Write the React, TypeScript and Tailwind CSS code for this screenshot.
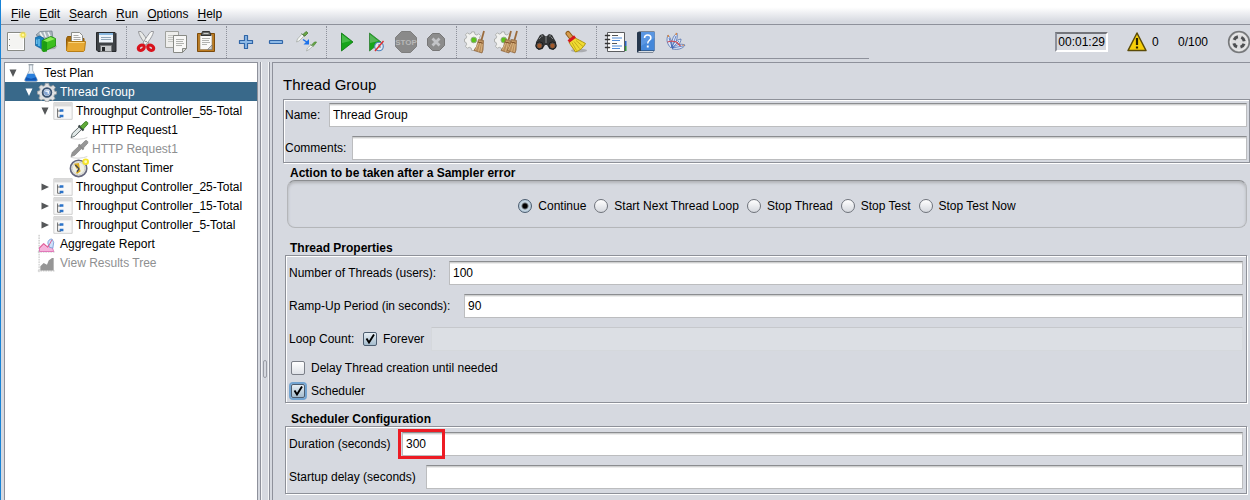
import React, { useState } from 'react';

type IconProps = { children: React.ReactNode; className?: string };

function Icon({ children, className = 'size-6' }: IconProps) {
  return (
    <svg viewBox="0 0 24 24" className={`block shrink-0 ${className}`} fill="none" aria-hidden="true">
      {children}
    </svg>
  );
}

const NewIcon = () => (
  <Icon>
    <path d="M3.500 2.500h17v18h-17z" fill="#f4f4f2" stroke="#888a85" />
    <path d="M4.500 3.500h15v16h-15z" stroke="#fff" />
    <path d="M5 9.500h1M5 15.500h1" stroke="#777" />
    <circle cx="19" cy="5" r="3.600" fill="#f7e96b" opacity=".6" />
    <circle cx="19" cy="5" r="2" fill="#fff6a0" stroke="#eedc3a" />
  </Icon>
);

const TemplatesIcon = () => (
  <Icon>
    <path d="M8 20l13-1 2-3-4-2z" fill="#777" opacity=".5" />
    <path d="M2 5l4-3.500 12-.5 1 8L10 9z" fill="#a9b4bc" stroke="#6d7d88" strokeWidth=".7" />
    <path d="M6 2.500l3 5M10 2l2 5M14 2l2 4" stroke="#eef3f6" strokeWidth="1.500" />
    <path d="M1.500 7.500l4-1.500 4 2v12L7 18.500l-5.500-3z" fill="#1b7fc0" stroke="#0d5a94" strokeWidth=".7" />
    <path d="M2.800 9.500v4.500M5 9v7" stroke="#7cd0f5" strokeWidth="1.200" />
    <path d="M8 10.500l9-4 4.500 2v7.500L9.500 21.500 8 20.500z" fill="#3cbf1e" stroke="#178a08" strokeWidth=".8" />
    <path d="M8.500 11.500l4.500-1v11l-3.500.5-1-1z" fill="#1d9c12" />
    <path d="M9.500 10.500l7-3.500 4.500 2-8 3z" fill="#8eec57" />
  </Icon>
);

const OpenIcon = () => (
  <Icon>
    <path d="M2.500 20.500V8.500l1-2h5l1.500 2h10v12z" fill="#a76b0c" stroke="#8f5a08" />
    <path d="M7.500 12V2.500h8l3 3V12z" fill="#fafafa" stroke="#8b8d89" />
    <path d="M9.500 5.500h5M9.500 7.500h7M9.500 9.500h7" stroke="#aaa" />
    <path d="M3.500 11.500h18l-1 9-1 1H3.500l-1-1z" fill="#e7a934" stroke="#b87e16" />
    <path d="M4.500 12.500h16" stroke="#f8d37c" />
  </Icon>
);

const SaveIcon = () => (
  <Icon>
    <path d="M2.500 2.500h18.500l1 1v18h-18l-1.500-1.500z" fill="#3e4246" stroke="#26292c" />
    <path d="M5 3h14v9.500H5z" fill="#eef4fa" />
    <path d="M5 3h14v2H5z" fill="#88b7df" />
    <path d="M7 7.500h10M7 9.500h10" stroke="#8fa6ba" />
    <path d="M6.500 15.500h11v6h-11z" fill="#c7cacc" stroke="#77797b" />
    <path d="M8 17h3v4H8z" fill="#24272a" />
  </Icon>
);

const CutIcon = () => (
  <Icon>
    <path d="M4.500 1.500c.5 4 4 9 8 13.500l2.500-2C12.500 8.500 9.500 4 7 1.500z" fill="#e8e9e7" stroke="#85878a" strokeWidth=".8" />
    <path d="M19.500 1.500c-.5 4-4 9-8 13.500L9 13c2.500-4.500 5.500-9 8-11.500z" fill="#f6f6f5" stroke="#85878a" strokeWidth=".8" />
    <circle cx="12" cy="11.500" r=".8" fill="#777" />
    <ellipse cx="7.300" cy="17.700" rx="3.200" ry="2.400" transform="rotate(-35 7.300 17.700)" stroke="#d9131d" strokeWidth="3.200" />
    <ellipse cx="16.700" cy="17.700" rx="3.200" ry="2.400" transform="rotate(35 16.700 17.700)" stroke="#d9131d" strokeWidth="3.200" />
  </Icon>
);

const CopyIcon = () => (
  <Icon>
    <path d="M1.500 1.500h13v16h-13z" fill="#eeeeec" stroke="#a0a29e" />
    <path d="M4 5.500h8M4 7.500h8M4 9.500h5M4 11.500h5" stroke="#c4c6c2" />
    <path d="M9.500 5.500h13v13l-4 4h-9z" fill="#f8f8f7" stroke="#888a85" />
    <path d="M12 9.500h8M12 11.500h7M12 13.500h8M12 15.500h6" stroke="#b1b3af" />
    <path d="M22.500 18.500h-4v4z" fill="#d5d7d3" stroke="#888a85" />
  </Icon>
);

const PasteIcon = () => (
  <Icon>
    <path d="M3.500 3.500h17v18h-17z" fill="#bd7c22" stroke="#7c4b0b" />
    <path d="M6 5h12v14.500H6z" fill="#f9f9f8" stroke="#8b7a60" strokeWidth=".6" />
    <path d="M8.500 1.500h7l1.500 4H7z" fill="#676a68" stroke="#333" />
    <path d="M9.500 3.500h5" stroke="#ccc" />
    <path d="M8 8.500h8M8 10.500h7M8 12.500h8M8 14.500h5" stroke="#b0b2af" />
    <path d="M18 15l-4.500 4.500H18z" fill="#cfd0ce" stroke="#777" strokeWidth=".7" />
  </Icon>
);

const PlusIcon = () => (
  <Icon>
    <path
      d="M10.500 5.500h3v5h5v3h-5v5h-3v-5h-5v-3h5z"
      fill="#8db9e6"
      stroke="#3066a8"
      strokeWidth="1.200"
      strokeLinejoin="round"
    />
  </Icon>
);

const MinusIcon = () => (
  <Icon>
    <rect x="5.500" y="10.500" width="13" height="3" rx=".5" fill="#8db9e6" stroke="#3066a8" strokeWidth="1.200" />
  </Icon>
);

const ToggleIcon = () => (
  <Icon>
    <path d="M2.500 12l1-3 4.500-5 2 2-5 5z" fill="#f5f7f5" stroke="#a0a6a0" strokeWidth=".7" />
    <path d="M7.500 3.500l3.500 3M9 4.500l3-3 2 1.500-3 3z" fill="#69a644" stroke="#4d7f38" strokeWidth=".9" />
    <path d="M9 9.500l4.500 3" stroke="#1c72ea" strokeWidth="1.500" />
    <path d="M15 9v5.500H9.500z" fill="#1c72ea" />
    <path d="M12.500 21l1-3 3.500-3 1.500 1.500-3.500 3z" fill="#f5f7f5" stroke="#a0a6a0" strokeWidth=".7" />
    <path d="M16.500 14.500l3 2M18 14.500l2.500-2.500h2l-2.500 3.500z" fill="#69a644" stroke="#4d8a35" strokeWidth=".8" />
  </Icon>
);

const PlayIcon = () => (
  <Icon>
    <path d="M7.500 3v18L19 12z" fill="#16a41a" stroke="#07750b" strokeWidth=".8" />
    <path d="M8 4.500L16.500 11 8 13z" fill="#5fc95f" opacity=".65" />
  </Icon>
);

const PlayNoTimersIcon = () => (
  <Icon>
    <path d="M5.500 3v18L17 12z" fill="#16a41a" stroke="#2c7e30" strokeWidth=".8" />
    <path d="M6 4.500L14.500 11 6 13z" fill="#70bd70" opacity=".7" />
    <circle cx="15" cy="16.500" r="4.300" fill="#e4e8ef" stroke="#4b83bd" strokeWidth="1.100" />
    <path d="M15 14v3h2" stroke="#5276a0" />
    <path d="M11 21l8.500-10" stroke="#dd3030" strokeWidth="1.400" />
  </Icon>
);

const StopIcon = () => (
  <Icon>
    <path d="M7.500 1.500h9l6 6v9l-6 6h-9l-6-6v-9z" fill="#8a8a8a" stroke="#7e7e7e" />
    <text
      x="12"
      y="15"
      textAnchor="middle"
      fill="#b8b8b8"
      fontFamily="Liberation Sans, sans-serif"
      fontSize="8"
      fontWeight="700"
    >
      STOP
    </text>
  </Icon>
);

const ShutdownIcon = () => (
  <Icon>
    <path d="M8.500 3.500h7l5 5v7l-5 5h-7l-5-5v-7z" fill="#8c8c8c" stroke="#777" />
    <path d="M8.500 8.500l7 7M15.500 8.500l-7 7" stroke="#c3c4c7" strokeWidth="2.800" />
  </Icon>
);

const Gear = () => (
  <g>
    <path
      d="M7.500 2h3l.5 2.500 2 .8 2-1.300 2 2-1.300 2 .8 2 2.500.5v3l-2.500.5-.8 2 1.300 2-2 2-2-1.300-2 .8-.5 2h-3L7 19l-2-.8-2 1-2-2L2.300 15l-.8-2L0 12.500v-3L1.500 9l.8-2L1 5l2-2 2 1.300 2-.8z"
      fill="#f2f2f0"
      stroke="#a6a8a6"
      strokeWidth=".9"
    />
    <circle cx="9.800" cy="10.500" r="3" fill="#5cc41a" stroke="#8fa886" />
  </g>
);

const BroomHead = () => (
  <g>
    <path d="M20 1l-2.500 9" stroke="#9a6b3c" strokeWidth="1.800" />
    <path d="M14.500 9.500l5 1-.5 9.500-1 3-8-2.500 2.500-4z" fill="#b98e5c" stroke="#8b6238" strokeWidth=".7" />
    <path d="M15.500 11l-4 9M17 11.500l-2.500 10M18.500 12l-1.500 10" stroke="#e0bd8a" strokeWidth=".8" />
    <path d="M14 12l5 1.200" stroke="#7c4d24" />
  </g>
);

const ClearIcon = () => (
  <Icon>
    <g transform="translate(.5 0) scale(.95)">
      <Gear />
    </g>
    <BroomHead />
  </Icon>
);

const ClearAllIcon = () => (
  <Icon>
    <g transform="translate(.5 0) scale(.95)">
      <Gear />
    </g>
    <g transform="translate(-3 0)">
      <BroomHead />
    </g>
    <g transform="translate(3 0)">
      <BroomHead />
    </g>
  </Icon>
);

const SearchIcon = () => (
  <Icon>
    <path d="M6 5l3-1 2 2h2l2-2 3 1 4 7 .5 5-3 3-4-1-2.500-4h-2L8.500 19l-4 1-3-3L2 12z" fill="#333536" />
    <path d="M7 6l2 0M15 6h2M5 9l2-2M17 7l2 2" stroke="#85888a" />
    <circle cx="5.500" cy="15.500" r="3.600" fill="#4a4a4a" stroke="#1d1d1d" />
    <circle cx="18.500" cy="15.500" r="3.600" fill="#4a4a4a" stroke="#1d1d1d" />
    <circle cx="5.500" cy="15.800" r="2.200" fill="#a25a2c" />
    <circle cx="18.500" cy="15.800" r="2.200" fill="#a25a2c" />
    <path d="M12 6v7" stroke="#8a8c8d" />
  </Icon>
);

const ResetSearchIcon = () => (
  <Icon>
    <ellipse cx="15" cy="20.500" rx="8" ry="1.800" fill="#555" opacity=".35" />
    <path d="M4 3.500l4 5" stroke="#8d5a16" strokeWidth="5" strokeLinecap="round" />
    <path d="M4 3.500l3.500 4.500" stroke="#d79c4c" strokeWidth="3" strokeLinecap="round" />
    <path d="M10.500 7.500c3 2 7 3.500 11 6-2 4-5.500 7-10 8.500C9.500 18.500 6.500 15.500 5 12z" fill="#f0dc32" stroke="#ae9510" />
    <path d="M8 12.500l4.500 8M10 11.500l5.500 7M12 10.500l7 6" stroke="#b9a014" strokeWidth=".8" />
    <path d="M4.500 11.500l6.500-5" stroke="#d51920" strokeWidth="3" />
  </Icon>
);

const FunctionHelperIcon = () => (
  <Icon>
    <path d="M19 11h3.500v5H19z" fill="#2a66c4" />
    <path d="M19 16h3.500v5H19z" fill="#2f9436" />
    <path d="M3.500 2.500h17v19h-17z" fill="#fdfdfd" stroke="#5b5d60" />
    <path
      d="M1.500 5.500h4M1.500 9.500h4M1.500 13.500h4M1.500 17.500h4"
      stroke="#333"
      strokeWidth="1.500"
      strokeLinecap="round"
    />
    <path d="M8 5.500h6M8 13.500h5" stroke="#555" />
    <path d="M8 8h10M8 10.500h8M8 16h10M8 18.500h8" stroke="#4d8ad8" />
  </Icon>
);

const HelpIcon = () => (
  <Icon>
    <path d="M3 2.500l2-1h15.500v19L19 22.500H3z" fill="#26384e" />
    <path d="M7 2h13.500v18.500H7z" fill="#4588da" />
    <path d="M4.500 21.500h15" stroke="#d8dde2" />
    <path d="M7 2h13.500v6L7 16z" fill="#73a9ea" opacity=".45" />
    <path
      d="M10.500 8c0-2 1.300-3 3.200-3s3.200 1 3.200 2.900c0 2.300-3.200 2.600-3.200 5.600"
      stroke="#fff"
      strokeWidth="1.500"
    />
    <path d="M12.800 15.500h1.900v2h-1.900z" fill="#fff" />
  </Icon>
);

const AboutIcon = () => (
  <Icon>
    <g stroke="#4f6fae" strokeWidth=".8" fill="#dfe7f6">
      <path d="M7 18C3 14 2 10 4 5c3 3 4 8 4 12z" />
      <path d="M8 17C7 11 9 6 13 3c1 5-1 10-4 14z" />
      <path d="M8 18c1-5 4-8 9-9 0 4-4 8-8 9z" />
      <path d="M8 19c3-4 8-6 13-4-2 4-8 5-12 4z" />
    </g>
    <path d="M5 8l3 9M12 6L8 17M15 11l-7 7M19 16l-11 2" stroke="#365fb8" strokeWidth=".7" />
    <path d="M3.500 12l4-1 5 1 4 4" stroke="#cf4850" strokeWidth="1.200" />
    <path d="M12.500 3l-.5 2M4 5l.5 2M20 15l-1.500.5" stroke="#e48a3c" strokeWidth="1.300" />
  </Icon>
);

const WarningIcon = () => (
  <Icon>
    <path d="M12 3l9 17.500H3z" fill="#f7cf08" stroke="#5b4b08" strokeWidth="1.500" strokeLinejoin="round" />
    <path d="M12 8v7" stroke="#2c2400" strokeWidth="2.200" />
    <path d="M10.900 16.500h2.200v2h-2.200z" fill="#2c2400" />
  </Icon>
);

const StatusIcon = () => (
  <Icon>
    <circle cx="12" cy="12" r="10.400" fill="#c9cacb" stroke="#77797b" strokeWidth="1.500" />
    <circle cx="12" cy="12" r="8.500" fill="#dededf" stroke="#efefef" />
    <circle cx="12" cy="12" r="5.300" stroke="#4e5052" strokeWidth="3" strokeDasharray="4.800 3.530" strokeDashoffset="-1.760" />
  </Icon>
);

const FlaskIcon = () => (
  <Icon className="size-5">
    <path d="M10 2h4v7l5.500 11c.5 1.500-.5 2.500-1.500 2.500H6c-1 0-2-1-1.500-2.500L10 9z" fill="#e9eff5" stroke="#9aa5ae" />
    <path d="M8 13l8 0 3.500 7.500-1.500 1.500H6l-1.500-1.500z" fill="#2a7fdc" />
    <path d="M6 17l6 2 6-2 1 4H5z" fill="#1257b4" />
    <path d="M9 2h6" stroke="#98a2aa" strokeWidth="1.500" />
  </Icon>
);

const ThreadGroupIcon = () => (
  <Icon className="size-5">
    <path
      d="M10 1.500h4l.7 3 2 .8L19.500 4 22 6.500l-1.500 2.600.7 2 2.300.4v3l-2.500.7-.8 2 1.300 2.500-2.500 2.500-2.500-1.300-2 .8-.5 2h-4l-.7-2.200-2-.8L4.800 22 2.200 19.500l1.300-2.600-.8-1.900-2.200-.5v-3.300l2.500-.7.8-2-1.500-2.300L5 3.700 7.400 5l2-.8z"
      fill="#dfe0e2"
      stroke="#9a9da0"
    />
    <circle cx="12" cy="12.500" r="5.200" fill="#e8ecf2" stroke="#38506f" strokeWidth="2.200" />
    <circle cx="12" cy="12.500" r="3.600" fill="#86a6d4" />
    <path d="M10 11h3.500v3" stroke="#fff" strokeWidth="1.500" />
  </Icon>
);

const ControllerIcon = () => (
  <Icon className="size-5">
    <path d="M1 2h22v20H1z" fill="#f8f8f8" stroke="#c7c7c7" />
    <path d="M1.500 2.500h21v4h-21z" fill="#d9d9d9" />
    <path d="M5.500 9v10.500h4M5.500 12h4" stroke="#555" />
    <path d="M8 10h4.500v3H8zM8 16.500h4.500v3H8z" fill="#2a72c8" />
  </Icon>
);

const DropperIcon = ({ muted = false }: { muted?: boolean }) => (
  <Icon className="size-5">
    <path d="M2 22c6 1.500 14 1.500 20-1" stroke="#ccc" />
    <path
      d="M2.500 21l1.500-5L13.500 7l3 3L7 19.500z"
      fill={muted ? '#949494' : '#dfe7e6'}
      stroke={muted ? '#8c8c8c' : '#4b5655'}
    />
    <path d="M11.500 6.500l6 6" stroke={muted ? '#8c8c8c' : '#3a4446'} strokeWidth="2.500" />
    <path
      d="M13.500 8L19 2.500c1.500-1.500 4.500 0 3.500 2.500L17 11z"
      fill={muted ? '#979797' : '#5faa38'}
      stroke={muted ? '#8c8c8c' : '#397a24'}
    />
  </Icon>
);

const TimerIcon = () => (
  <Icon className="size-5">
    <circle cx="11.500" cy="12.500" r="9.800" fill="#f1f1e4" stroke="#66687f" strokeWidth="2" />
    <circle cx="11.500" cy="12.500" r="7.500" stroke="#c6c8cc" />
    <path d="M6 7l6-1 1 6-4 1zM8 18l5-5 1 3-4 3z" fill="#dcae24" />
    <path d="M7.500 8.500l4.500 4.500-2.500 3.500" stroke="#414450" strokeWidth="1.600" />
    <circle cx="20" cy="4.500" r="4" fill="#f5e42c" />
    <circle cx="20" cy="4.500" r="1.700" fill="#fffbbd" />
  </Icon>
);

const AggregateIcon = () => (
  <Icon className="size-5">
    <path d="M2.500 1v22M1 21.500h20" stroke="#a9a9a9" strokeDasharray="2 1" />
    <path d="M3 21v-5l5-5 4 4 5-3 3 9z" fill="#f5b4dc" stroke="#dc68b0" />
    <path d="M13 11c0-3 2-5 5-5l2 4-1 7-4-1z" fill="#cfe0fa" stroke="#7297d4" />
    <path d="M3 17l5-5 5 4 5-9" stroke="#de4c7f" />
  </Icon>
);

const ResultsIcon = () => (
  <Icon className="size-5">
    <path d="M2.500 1v22M1 21.500h20" stroke="#b5b5b5" strokeDasharray="2 1" />
    <path d="M4 21v-5l4-4 4 2 2-5 4-3h2v15z" fill="#969696" />
  </Icon>
);

const TOOL_GROUPS: { label: string; icon: () => React.ReactElement; disabled?: boolean }[][] = [
  [
    { label: 'New', icon: NewIcon },
    { label: 'Templates', icon: TemplatesIcon },
    { label: 'Open', icon: OpenIcon },
    { label: 'Save', icon: SaveIcon },
  ],
  [
    { label: 'Cut', icon: CutIcon },
    { label: 'Copy', icon: CopyIcon },
    { label: 'Paste', icon: PasteIcon },
  ],
  [
    { label: 'Expand all', icon: PlusIcon },
    { label: 'Collapse all', icon: MinusIcon },
    { label: 'Toggle', icon: ToggleIcon },
  ],
  [
    { label: 'Start', icon: PlayIcon },
    { label: 'Start no pauses', icon: PlayNoTimersIcon },
    { label: 'Stop', icon: StopIcon, disabled: true },
    { label: 'Shutdown', icon: ShutdownIcon, disabled: true },
  ],
  [
    { label: 'Clear', icon: ClearIcon },
    { label: 'Clear all', icon: ClearAllIcon },
  ],
  [
    { label: 'Search tree', icon: SearchIcon },
    { label: 'Reset search', icon: ResetSearchIcon },
  ],
  [
    { label: 'Function helper', icon: FunctionHelperIcon },
    { label: 'Help', icon: HelpIcon },
    { label: 'About', icon: AboutIcon },
  ],
];

const MENUS = ['File', 'Edit', 'Search', 'Run', 'Options', 'Help'];

function MenuBar() {
  return (
    <nav className="flex h-[25px] items-center gap-px border-b border-[#8e919b] bg-linear-to-b from-white from-30% to-[#d6d9e0] to-90% pt-1 pl-[6px]">
      {MENUS.map((name) => (
        <button key={name} type="button" className="px-1">
          <span className="underline underline-offset-2">{name[0]}</span>
          {name.slice(1)}
        </button>
      ))}
    </nav>
  );
}

function Toolbar() {
  return (
    <div className="flex h-[37px] items-start">
      <div className="flex h-[34px] min-w-0 flex-1 items-center border-b border-[#8e919b]">
        {TOOL_GROUPS.map((group, g) => (
          <React.Fragment key={group[0].label}>
            {g > 0 && (
              <span className="flex h-8 w-[10px] shrink-0 justify-center">
                <span className="border-l border-dotted border-[#8e919b]" />
              </span>
            )}
            {group.map(({ label, icon: Glyph, disabled }) => (
              <button
                key={label}
                type="button"
                aria-label={label}
                disabled={disabled}
                className="flex h-8 w-[30px] shrink-0 items-center justify-center"
              >
                <Glyph />
              </button>
            ))}
          </React.Fragment>
        ))}
      </div>
      <div className="-mr-px flex h-[34px] w-[382px] shrink-0 items-center justify-end">
        <output className="mr-[17px] border-2 border-t-[#73757b] border-r-white border-b-white border-l-[#8e919b] px-px leading-4">
          00:01:29
        </output>
        <WarningIcon />
        <span className="ml-[3px] w-[26px]">0</span>
        <span className="w-[49px]">0/100</span>
        <StatusIcon />
      </div>
    </div>
  );
}

type TreeItem = {
  label: string;
  level: number;
  icon: React.ReactElement;
  open?: boolean;
  selected?: boolean;
  muted?: boolean;
};

const TREE: TreeItem[] = [
  { label: 'Test Plan', level: 0, icon: <FlaskIcon />, open: true },
  { label: 'Thread Group', level: 1, icon: <ThreadGroupIcon />, open: true, selected: true },
  { label: 'Throughput Controller_55-Total', level: 2, icon: <ControllerIcon />, open: true },
  { label: 'HTTP Request1', level: 3, icon: <DropperIcon /> },
  { label: 'HTTP Request1', level: 3, icon: <DropperIcon muted />, muted: true },
  { label: 'Constant Timer', level: 3, icon: <TimerIcon /> },
  { label: 'Throughput Controller_25-Total', level: 2, icon: <ControllerIcon />, open: false },
  { label: 'Throughput Controller_15-Total', level: 2, icon: <ControllerIcon />, open: false },
  { label: 'Throughput Controller_5-Total', level: 2, icon: <ControllerIcon />, open: false },
  { label: 'Aggregate Report', level: 1, icon: <AggregateIcon /> },
  { label: 'View Results Tree', level: 1, icon: <ResultsIcon />, muted: true },
];

const INDENTS = ['pl-0', 'pl-4', 'pl-8', 'pl-12'];

function TreeRow({ item }: { item: TreeItem }) {
  const tone = item.selected ? 'bg-[#39698a] text-white' : item.muted ? 'text-[#8e8f91]' : 'text-black';
  const arrow = item.selected ? 'fill-white' : 'fill-[#555759]';
  return (
    <li
      role="treeitem"
      aria-level={item.level + 1}
      aria-selected={!!item.selected}
      aria-expanded={item.open}
      className={`flex h-[19px] items-center ${INDENTS[item.level]} ${tone}`}
    >
      <span className="flex w-4 shrink-0 justify-center">
        {item.open !== undefined && (
          <svg viewBox="0 0 8 8" className={`size-2 ${arrow}`} aria-hidden="true">
            <path d={item.open ? 'M0.500 0.500h7L4 8z' : 'M0.500 0.500v7L8 4z'} />
          </svg>
        )}
      </span>
      {item.icon}
      <span className="ml-[3px] whitespace-nowrap">{item.label}</span>
    </li>
  );
}

const FIELD =
  'h-6 min-w-0 flex-1 border border-[#bcbdbf] border-t-[#8b8d90] bg-white px-[3px] shadow-[inset_0_1px_0_#cfd0d0,inset_0_2px_0_#ececec] outline-none';

const ETCHED = 'border border-[#8e9199] shadow-[1px_1px_0_#fff,inset_1px_1px_0_#fff]';

type FieldProps = { id: string; label: string; value?: string; labelClass: string };

function Field({ id, label, value = '', labelClass }: FieldProps) {
  return (
    <div className="flex items-center">
      <label htmlFor={id} className={`shrink-0 whitespace-nowrap ${labelClass}`}>
        {label}
      </label>
      <input id={id} type="text" defaultValue={value} className={FIELD} />
    </div>
  );
}

function Check({ label, initial = false, focused = false }: { label: string; initial?: boolean; focused?: boolean }) {
  const [on, setOn] = useState(initial);
  return (
    <label className="flex items-center gap-[6px] whitespace-nowrap">
      <span className="relative flex">
        <input
          type="checkbox"
          checked={on}
          onChange={() => setOn(!on)}
          className={`size-[14px] appearance-none rounded-[2px] border ${
            on
              ? 'border-[#4c5d70] bg-linear-to-b from-[#e8eff5] to-[#a5bccd]'
              : 'border-[#7b7f88] bg-linear-to-b from-white to-[#dfe2e8]'
          } ${focused ? 'shadow-[0_0_0_2px_#73a4d1]' : ''}`}
        />
        {on && (
          <svg viewBox="0 0 14 14" className="pointer-events-none absolute inset-0 size-[14px]" aria-hidden="true">
            <path d="M3.500 6.500l2.500 4L11 2.500" fill="none" stroke="#000" strokeWidth="1.900" />
          </svg>
        )}
      </span>
      {label}
    </label>
  );
}

const ACTIONS = ['Continue', 'Start Next Thread Loop', 'Stop Thread', 'Stop Test', 'Stop Test Now'];

function ErrorActions() {
  const [action, setAction] = useState(ACTIONS[0]);
  return (
    <div className="mr-[3px] ml-[4px] flex h-12 items-center justify-center gap-2 rounded-lg border border-[#b4b6b9] border-t-[#8b8d90] pt-1 shadow-[inset_0_2px_3px_#b0b2b6]">
      {ACTIONS.map((name) => (
        <label key={name} className="flex items-center gap-[6px] whitespace-nowrap">
          <input
            type="radio"
            name="error-action"
            checked={action === name}
            onChange={() => setAction(name)}
            className="size-[14px] appearance-none rounded-full border border-[#6f737b] bg-linear-to-b from-white to-[#d5d8de] checked:border-[#4c5d70] checked:bg-[radial-gradient(circle,#000_0,#000_2px,#c8d8e4_4px,#a9bfd0_7px)]"
          />
          {name}
        </label>
      ))}
    </div>
  );
}

function ThreadGroupPanel() {
  return (
    <main className="min-w-0 flex-1 border-t border-l border-[#8e919b] pl-[10px]">
      <h1 className="flex h-9 items-center pt-2 text-[15px]">Thread Group</h1>

      <section className={`flex flex-col gap-[9px] pt-[3px] pr-[2px] pb-[2px] pl-px ${ETCHED}`}>
        <Field id="name" label="Name:" value="Thread Group" labelClass="w-[44px]" />
        <Field id="comments" label="Comments:" labelClass="w-[67px]" />
      </section>

      <h2 className="flex h-[17px] items-center pt-[2px] pl-[7px] font-bold">
        Action to be taken after a Sampler error
      </h2>
      <ErrorActions />

      <h2 className="mt-3 flex h-[15px] items-center pl-[7px] font-bold">Thread Properties</h2>
      <section className={`mr-[3px] ml-[2px] h-[148px] pt-[5px] pr-[3px] pl-[3px] ${ETCHED}`}>
        <div className="flex flex-col gap-[9px]">
          <Field id="threads" label="Number of Threads (users):" value="100" labelClass="w-[160px]" />
          <Field id="ramp" label="Ramp-Up Period (in seconds):" value="90" labelClass="w-[175px]" />
          <div className="flex items-center">
            <label htmlFor="loops" className="w-[74px] shrink-0">
              Loop Count:
            </label>
            <Check label="Forever" initial />
            <input
              id="loops"
              type="text"
              disabled
              className="ml-[7px] h-6 min-w-0 flex-1 border border-[#d5d8dc] border-t-[#c6c8cc] bg-[#dcdfe4]"
            />
          </div>
        </div>
        <div className="flex flex-col gap-[5px] pt-2 pl-[2px] leading-[18px]">
          <Check label="Delay Thread creation until needed" />
          <Check label="Scheduler" initial focused />
        </div>
      </section>

      <h2 className="mt-2 flex h-[15px] items-center pl-[8px] font-bold">Scheduler Configuration</h2>
      <section className={`mr-[3px] ml-[2px] flex h-[68px] flex-col gap-[9px] pt-[5px] pr-[3px] pl-[3px] ${ETCHED}`}>
        <div className="relative">
          <Field id="duration" label="Duration (seconds)" value="300" labelClass="w-[113px]" />
          <span className="pointer-events-none absolute -top-[3px] left-[109px] h-[30px] w-[47px] border-3 border-[#ed1c24]" />
        </div>
        <Field id="delay" label="Startup delay (seconds)" labelClass="w-[137px]" />
      </section>
    </main>
  );
}

export default function App() {
  return (
    <div className="flex min-h-screen flex-col overflow-x-hidden border-l border-[#1883d7] bg-[#d6d9e0] font-['Liberation_Sans',Arial,sans-serif] text-[12px] leading-4 text-black">
      <MenuBar />
      <Toolbar />
      <div className="flex flex-1 pl-[3px]">
        <ul role="tree" className="w-[254px] shrink-0 border border-b-0 border-[#8e919b] bg-white">
          {TREE.map((item, i) => (
            <TreeRow key={i} item={item} />
          ))}
        </ul>
        <div
          role="separator"
          aria-orientation="vertical"
          className="mx-[2px] flex w-[10px] shrink-0 items-center justify-center border-x border-[#8e919b] shadow-[inset_1px_0_0_#f4f5f7,inset_-1px_0_0_#f4f5f7]"
        >
          <span className="mt-44 h-[18px] w-1 rounded-xs border border-[#9a9da6]" />
        </div>
        <ThreadGroupPanel />
      </div>
    </div>
  );
}
